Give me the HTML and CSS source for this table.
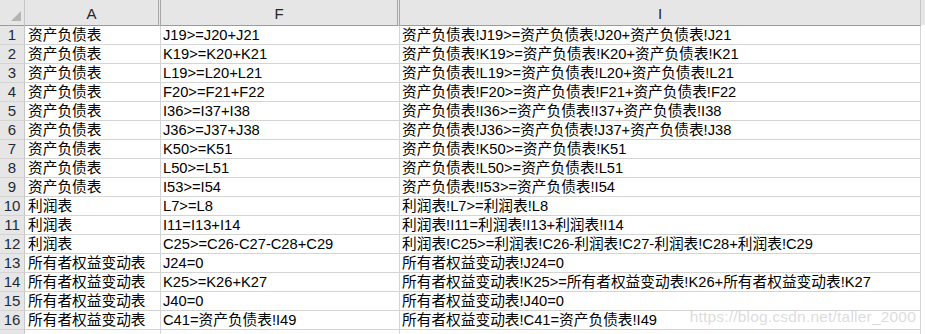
FILE: index.html
```html
<!DOCTYPE html>
<html lang="zh">
<head>
<meta charset="utf-8">
<link rel="stylesheet" href="styles.css">
</head>
<body>
<div class="sheet">
  <div class="grid">
    <div class="hd corner"><span class="tri"></span></div>
    <div class="hd col hid">A</div>
    <div class="hd col hid">F</div>
    <div class="hd col">I</div>

    <div class="rn">1</div><div class="c">资产负债表</div><div class="c">J19&gt;=J20+J21</div><div class="c">资产负债表!J19&gt;=资产负债表!J20+资产负债表!J21</div>
    <div class="rn">2</div><div class="c">资产负债表</div><div class="c">K19&gt;=K20+K21</div><div class="c">资产负债表!K19&gt;=资产负债表!K20+资产负债表!K21</div>
    <div class="rn">3</div><div class="c">资产负债表</div><div class="c">L19&gt;=L20+L21</div><div class="c">资产负债表!L19&gt;=资产负债表!L20+资产负债表!L21</div>
    <div class="rn">4</div><div class="c">资产负债表</div><div class="c">F20&gt;=F21+F22</div><div class="c">资产负债表!F20&gt;=资产负债表!F21+资产负债表!F22</div>
    <div class="rn">5</div><div class="c">资产负债表</div><div class="c">I36&gt;=I37+I38</div><div class="c">资产负债表!I36&gt;=资产负债表!I37+资产负债表!I38</div>
    <div class="rn">6</div><div class="c">资产负债表</div><div class="c">J36&gt;=J37+J38</div><div class="c">资产负债表!J36&gt;=资产负债表!J37+资产负债表!J38</div>
    <div class="rn">7</div><div class="c">资产负债表</div><div class="c">K50&gt;=K51</div><div class="c">资产负债表!K50&gt;=资产负债表!K51</div>
    <div class="rn">8</div><div class="c">资产负债表</div><div class="c">L50&gt;=L51</div><div class="c">资产负债表!L50&gt;=资产负债表!L51</div>
    <div class="rn">9</div><div class="c">资产负债表</div><div class="c">I53&gt;=I54</div><div class="c">资产负债表!I53&gt;=资产负债表!I54</div>
    <div class="rn">10</div><div class="c">利润表</div><div class="c">L7&gt;=L8</div><div class="c">利润表!L7&gt;=利润表!L8</div>
    <div class="rn">11</div><div class="c">利润表</div><div class="c">I11=I13+I14</div><div class="c">利润表!I11=利润表!I13+利润表!I14</div>
    <div class="rn">12</div><div class="c">利润表</div><div class="c">C25&gt;=C26-C27-C28+C29</div><div class="c">利润表!C25&gt;=利润表!C26-利润表!C27-利润表!C28+利润表!C29</div>
    <div class="rn">13</div><div class="c">所有者权益变动表</div><div class="c">J24=0</div><div class="c">所有者权益变动表!J24=0</div>
    <div class="rn">14</div><div class="c">所有者权益变动表</div><div class="c">K25&gt;=K26+K27</div><div class="c">所有者权益变动表!K25&gt;=所有者权益变动表!K26+所有者权益变动表!K27</div>
    <div class="rn">15</div><div class="c">所有者权益变动表</div><div class="c">J40=0</div><div class="c">所有者权益变动表!J40=0</div>
    <div class="rn">16</div><div class="c">所有者权益变动表</div><div class="c">C41=资产负债表!I49</div><div class="c">所有者权益变动表!C41=资产负债表!I49</div>
    <div class="rn"></div><div class="c"></div><div class="c"></div><div class="c"></div>
  </div>
  <div class="watermark">https://blog.csdn.net/taller_2000</div>
</div>
</body>
</html>
```

FILE: styles.css
```css
html, body {
  margin: 0;
  padding: 0;
  background: #ffffff;
}
body {
  width: 925px;
  height: 334px;
  overflow: hidden;
  font-family: "Liberation Sans", "Noto Sans CJK SC", sans-serif;
}
.sheet {
  position: relative;
  width: 925px;
  height: 334px;
  overflow: hidden;
  background: linear-gradient(#e6e6e6, #e6e6e6) top left / 925px 25px no-repeat, #ffffff;
}
.grid {
  display: grid;
  grid-template-columns: 25px 136px 239px 521px;
  grid-template-rows: 26px repeat(17, 19px);
  width: 921px;
}
.grid > div {
  box-sizing: border-box;
  overflow: hidden;
  white-space: nowrap;
}
.hd {
  background: #e6e6e6;
  border-bottom: 1px solid #9b9b9b;
  border-right: 1px solid #c6c6c6;
  color: #262626;
  font-size: 15px;
  line-height: 25px;
  text-align: center;
}
.corner {
  position: relative;
}
.tri {
  position: absolute;
  right: 3px;
  bottom: 4px;
  width: 0;
  height: 0;
  border-left: 10px solid transparent;
  border-bottom: 10px solid #b4b4b4;
}
.col {
  padding-top: 1px;
}
.hid {
  border-right: 3px double #a8a8a8;
}
.grid > .hd:last-of-type {
  border-right: 1px solid #9b9b9b;
}
.rn {
  background: #e6e6e6;
  border-right: 1px solid #c6c6c6;
  border-bottom: 1px solid #d4d4d4;
  color: #1e2a3a;
  font-size: 15px;
  line-height: 18px;
  text-align: center;
}
.c {
  background: #ffffff;
  border-right: 1px solid #d4d4d4;
  border-bottom: 1px solid #d4d4d4;
  color: #000000;
  font-size: 14.7px;
  line-height: 19px;
  padding-left: 2px;
}
.grid > .c:nth-child(4n+2) {
  padding-left: 3px;
}
.watermark {
  position: absolute;
  right: 9px;
  bottom: 8px;
  font-family: "Liberation Sans", sans-serif;
  font-size: 15.5px;
  letter-spacing: 0.2px;
  color: rgba(190, 190, 190, 0.55);
  pointer-events: none;
}
```
